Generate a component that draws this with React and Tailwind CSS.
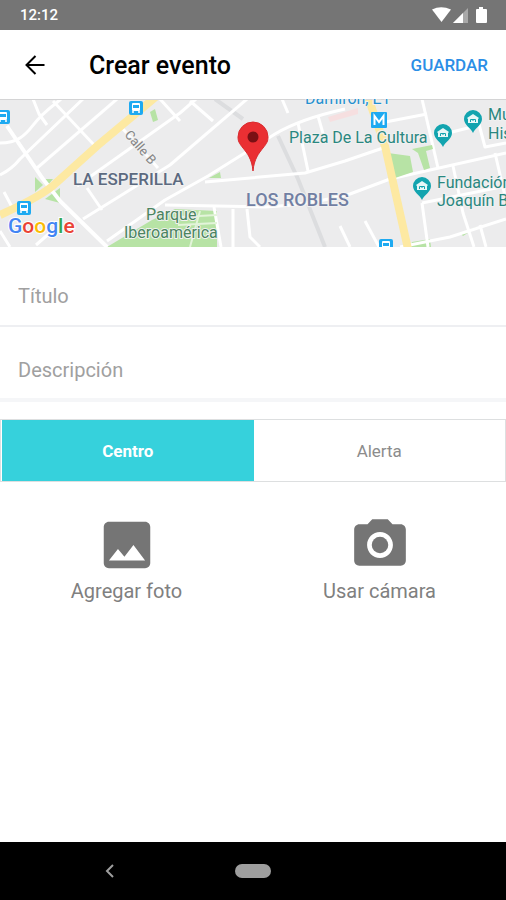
import { useState } from "react";
import { MdCameraAlt, MdImage } from "react-icons/md";

const roads = [
  "M7 27L43 80L60 102L107 148",
  "M0 44Q12 44 20 39C34 30 30 24 55 5L61 0",
  "M0 76Q12 70 20 60L83 0",
  "M37 69L117 0",
  "M33 0L39 15L47 26",
  "M53 2L95 47",
  "M4 93L12 108M0 132L10 148M36 146L52 132",
  "M83 120L170 66L247 0",
  "M87 89L102 111M77 87L180 14L196 0",
  "M107 142L165 101L208 77L275 35Q300 20 345 10",
  "M123 30L158 69",
  "M190 2L213 22",
  "M180 22L160 0",
  "M205 83L305 74L345 62L383 49",
  "M165 106L265 108Q310 106 350 95L390 80L506 54",
  "M233 110V148M247 110L250 138L260 148M214 108L221 148",
  "M298 24L308 72",
  "M282 0L288 14M318 17L324 38",
  "M375 25L427 15",
  "M422 0L438 69",
  "M422 104L428 148M422 104L506 87",
  "M453 67L463 114L474 148",
  "M476 14L485 48L506 44",
  "M495 54L505 97",
  "M440 36L472 28",
  "M400 148L450 138L506 120",
  "M340 127L350 148M365 122L379 148",
  "M480 126L486 148",
];

const parks = [
  "107,148 152,121 175,110 217,112 217,148",
  "412,143 430,140 431,148 410,148",
  "460,134 477,128 463,137",
];

const plazas = [
  "35,78 43,86 35,93",
  "44,80 53,80 48,86",
  "45,100 60,89 60,104",
  "150,13 155,10 158,21 153,23",
  "388,54 410,57 413,73 395,79",
  "412,50 432,46 433,50 426,52 430,69 424,71 418,54",
  "209,79 220,73 221,79",
];

function Transit({ x, y }) {
  return (
    <g transform={`translate(${x} ${y})`}>
      <rect x="-7" y="-7" width="14" height="14" rx="2" fill="#1eaaf1" />
      <rect x="-4" y="-5" width="8" height="8" rx="1" fill="#fff" />
      <rect x="-3" y="-3" width="6" height="3" fill="#1eaaf1" />
      <path d="M-3 3v2M3 3v2" stroke="#fff" strokeWidth="1.5" />
    </g>
  );
}

function Museum({ x, y }) {
  return (
    <g transform={`translate(${x} ${y})`}>
      <path d="M0 14C-2 9-9 6-9 0A9 9 0 0 1 9 0C9 6 2 9 0 14Z" fill="#12a4af" />
      <path d="M-6 -1L0 -5L6 -1L5 0V4H-5V0Z" fill="#e6f7f7" />
      <path d="M-2.500 3V0.500H2.500V3M0 .5V2" stroke="#12a4af" fill="none" />
    </g>
  );
}

function Map() {
  return (
    <svg
      viewBox="0 0 506 148"
      preserveAspectRatio="xMidYMid slice"
      role="img"
      aria-label="Mapa"
      className="block h-[148px] w-full font-[Roboto,sans-serif]"
    >
      <rect width="506" height="148" fill="#ececed" />
      <polygon points="328,18 358,9 358,15 330,23" fill="#f6dfe0" />
      {parks.map((p) => (
        <polygon key={p} points={p} fill="#b7e3a5" />
      ))}
      <path d="M215 0L243 20M278 37L298 80L325 148" stroke="#dcdddf" strokeWidth="4" fill="none" />
      <g fill="none" stroke="#fff" strokeWidth="3" strokeLinejoin="round">
        {roads.map((d) => (
          <path key={d} d={d} />
        ))}
      </g>
      {plazas.map((p) => (
        <polygon key={p} points={p} fill="#b7e3a5" />
      ))}
      <path d="M180 118L217 116M178 126L217 124M190 148L200 112" stroke="#e3f4da" strokeWidth="2" fill="none" />
      <path d="M7 27L43 80L60 102L107 148" stroke="#fff" strokeWidth="4" fill="none" />
      <path d="M158 -4L97 47L56 84Q44 96 0 116" stroke="#fde9a2" strokeWidth="8" fill="none" />
      <path d="M368 -2L385 47L408 150" stroke="#fde9a2" strokeWidth="8" fill="none" />
      <rect width="506" height="1" fill="#d4d4d5" />

      <Transit x={136} y={9} />
      <Transit x={3} y={18} />
      <Transit x={24} y={109} />
      <Transit x={386} y={147} />
      <rect x="371" y="13" width="16" height="16" rx="1" fill="#1eaaf1" />
      <path d="M374.500 26V17L379 23L383.500 17V26" fill="none" stroke="#fff" strokeWidth="2" />
      <Museum x={443} y={34} />
      <Museum x={473} y={20} />
      <Museum x={422} y={87} />

      <g stroke="#f1f1f1" strokeWidth="2" strokeLinejoin="round" paintOrder="stroke">
        <text x="73" y="86" fontSize="17" fontWeight="500" fill="#5c6a80">LA ESPERILLA</text>
        <text x="246" y="107" fontSize="18" fontWeight="500" fill="#717fa3">LOS ROBLES</text>
        <g fontSize="16" fill="#2a8780">
          <text x="289" y="44">Plaza De La Cultura</text>
          <text x="437" y="89">Fundación</text>
          <text x="437" y="107">Joaquín B</text>
          <text x="488" y="21">Mu</text>
          <text x="488" y="40">His</text>
        </g>
        <g fontSize="16" fill="#4b8460">
          <text x="146" y="121">Parque</text>
          <text x="124" y="139">Iberoamérica</text>
        </g>
        <text x="305" y="5" fontSize="16" fill="#2590d0">Damirón, E1</text>
        <text fontSize="13" fill="#858585" transform="translate(124 36) rotate(49)">Calle B</text>
      </g>
      <text
        x="8"
        y="134"
        fontSize="21"
        stroke="#fff"
        strokeWidth="2"
        paintOrder="stroke"
        className="font-medium"
      >
        <tspan fill="#4285f4">G</tspan>
        <tspan fill="#ea4335">o</tspan>
        <tspan fill="#fbbc05">o</tspan>
        <tspan fill="#4285f4">g</tspan>
        <tspan fill="#34a853">l</tspan>
        <tspan fill="#ea4335">e</tspan>
      </text>

      <path
        d="M253 72C252 60 247 54 243 49C239 44 238 42 238 38A15 15 0 0 1 268 38C268 42 267 44 263 49C259 54 254 60 253 72Z"
        fill="#ea2f33"
        stroke="#d92b2f"
      />
      <circle cx="253" cy="38" r="5.5" fill="#7a1014" />
    </svg>
  );
}

function StatusBar() {
  return (
    <div className="flex h-[30px] items-center justify-between bg-[#757575] pr-4 pl-5 text-white">
      <span className="text-[15px] font-medium">12:12</span>
      <svg viewBox="0 0 60 20" className="h-5 w-[60px]" aria-hidden="true">
        <path d="M2 4.500Q11 0 21 4.500L11.500 17Z" fill="#fff" />
        <path d="M38 3V18H23Z" fill="#a9a9a9" />
        <path d="M33 8V18H23Z" fill="#fff" />
        <path d="M49 2h4v2h3q1 0 1 1v12q0 1-1 1h-9q-1 0-1-1V5q0-1 1-1h2z" fill="#fff" />
      </svg>
    </div>
  );
}

const segment = "flex-1 cursor-pointer pt-0.5 text-[17px]";

export default function App() {
  const [kind, setKind] = useState("Centro");

  return (
    <div className="flex min-h-screen flex-col bg-white font-[Roboto,sans-serif]">
      <StatusBar />
      <header className="flex h-[69px] items-center px-[18px] pt-[3px]">
        <button type="button" aria-label="Volver" className="flex w-[71px] pl-1 text-black">
          <svg viewBox="0 0 26 26" className="size-[26px]" fill="none" stroke="currentColor" strokeWidth="2">
            <path d="M22.500 12H5M13.500 3L4.500 12L13.500 21" />
          </svg>
        </button>
        <h1 className="flex-1 text-[25px] font-medium text-black">Crear evento</h1>
        <button type="button" className="text-[17px] font-medium text-[#2b8ee6]">
          GUARDAR
        </button>
      </header>
      <Map />

      <form className="flex flex-col" onSubmit={(e) => e.preventDefault()}>
        <input
          type="text"
          aria-label="Título"
          placeholder="Título"
          className="h-20 border-b-2 border-[#eeeff2] px-[18px] pt-5 text-xl outline-none placeholder:text-[#a0a0a0]"
        />
        <input
          type="text"
          aria-label="Descripción"
          placeholder="Descripción"
          className="h-[75px] border-b-4 border-[#f5f6f8] px-[18px] pt-[14px] text-xl outline-none placeholder:text-[#a0a0a0]"
        />

        <div className="mt-[17px] flex h-[63px] border border-[#dddfe0] pl-px">
          {["Centro", "Alerta"].map((name) => (
            <button
              key={name}
              type="button"
              aria-pressed={kind === name}
              onClick={() => setKind(name)}
              className={
                kind === name
                  ? `${segment} bg-[#36d1dc] font-bold text-white`
                  : `${segment} bg-white text-[#8c8c8c]`
              }
            >
              {name}
            </button>
          ))}
        </div>

        <div className="mt-8 grid grid-cols-2 text-xl text-[#808080]">
          <button type="button" className="flex flex-col items-center gap-px">
            <MdImage className="size-[62px] text-[#757575]" />
            Agregar foto
          </button>
          <button type="button" className="flex flex-col items-center gap-px">
            <MdCameraAlt className="size-[62px] text-[#757575]" />
            Usar cámara
          </button>
        </div>
      </form>

      <nav className="mt-auto grid h-[58px] grid-cols-[1fr_auto_1fr] items-center bg-black">
        <button type="button" aria-label="Atrás" className="flex justify-center pr-4">
          <svg viewBox="0 0 10 16" className="h-4 w-[10px]" fill="none" stroke="#9e9e9e" strokeWidth="2">
            <path d="M8 2L2 8L8 14" />
          </svg>
        </button>
        <button type="button" aria-label="Inicio" className="h-[14px] w-9 rounded-full bg-[#9e9e9e]" />
      </nav>
    </div>
  );
}
